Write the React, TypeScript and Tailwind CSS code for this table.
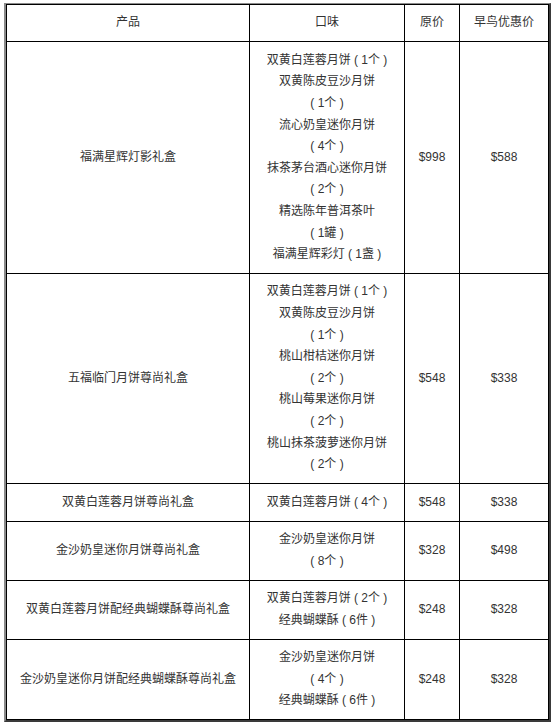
const rows: { name: string; flavor: string[]; price: string; early: string }[] = [
  {
    name: "福满星辉灯影礼盒",
    flavor: [
      "双黄白莲蓉月饼 ( 1个 )",
      "双黄陈皮豆沙月饼",
      "( 1个 )",
      "流心奶皇迷你月饼",
      "( 4个 )",
      "抹茶茅台酒心迷你月饼",
      "( 2个 )",
      "精选陈年普洱茶叶",
      "( 1罐 )",
      "福满星辉彩灯 ( 1盏 )",
    ],
    price: "$998",
    early: "$588",
  },
  {
    name: "五福临门月饼尊尚礼盒",
    flavor: [
      "双黄白莲蓉月饼 ( 1个 )",
      "双黄陈皮豆沙月饼",
      "( 1个 )",
      "桃山柑桔迷你月饼",
      "( 2个 )",
      "桃山莓果迷你月饼",
      "( 2个 )",
      "桃山抹茶菠萝迷你月饼",
      "( 2个 )",
    ],
    price: "$548",
    early: "$338",
  },
  {
    name: "双黄白莲蓉月饼尊尚礼盒",
    flavor: ["双黄白莲蓉月饼 ( 4个 )"],
    price: "$548",
    early: "$338",
  },
  {
    name: "金沙奶皇迷你月饼尊尚礼盒",
    flavor: ["金沙奶皇迷你月饼", "( 8个 )"],
    price: "$328",
    early: "$498",
  },
  {
    name: "双黄白莲蓉月饼配经典蝴蝶酥尊尚礼盒",
    flavor: ["双黄白莲蓉月饼 ( 2个 )", "经典蝴蝶酥 ( 6件 )"],
    price: "$248",
    early: "$328",
  },
  {
    name: "金沙奶皇迷你月饼配经典蝴蝶酥尊尚礼盒",
    flavor: ["金沙奶皇迷你月饼", "( 4个 )", "经典蝴蝶酥 ( 6件 )"],
    price: "$248",
    early: "$328",
  },
];

const cell =
  "border border-black px-[4px] py-[7.4px] text-center align-middle font-normal";

export default function App() {
  return (
    <div
      className="min-h-screen bg-white pl-[4px] pt-[3px] text-[12px] leading-[21.6px] text-[#333333]"
      style={{ fontFamily: '"Liberation Sans", "Noto Sans CJK SC", sans-serif' }}
    >
      <div className="w-fit border-t border-l-2 border-r-2 border-b-2 border-t-[#8a8a8a] border-l-[#8a8a8a] border-r-[#3a3a3a] border-b-[#3a3a3a]">
        <table className="w-[542px] table-fixed border-collapse">
          <colgroup>
            <col className="w-[243px]" />
            <col className="w-[155px]" />
            <col className="w-[55px]" />
            <col className="w-[89px]" />
          </colgroup>
          <thead>
            <tr>
              <th className={cell}>产品</th>
              <th className={cell}>口味</th>
              <th className={cell}>原价</th>
              <th className={cell}>早鸟优惠价</th>
            </tr>
          </thead>
          <tbody>
            {rows.map((r) => (
              <tr key={r.name}>
                <td className={cell}>{r.name}</td>
                <td className={cell}>
                  {r.flavor.map((f, i) => (
                    <div key={i} className="whitespace-pre">
                      {f}
                    </div>
                  ))}
                </td>
                <td className={cell}>{r.price}</td>
                <td className={cell}>{r.early}</td>
              </tr>
            ))}
          </tbody>
        </table>
      </div>
    </div>
  );
}
